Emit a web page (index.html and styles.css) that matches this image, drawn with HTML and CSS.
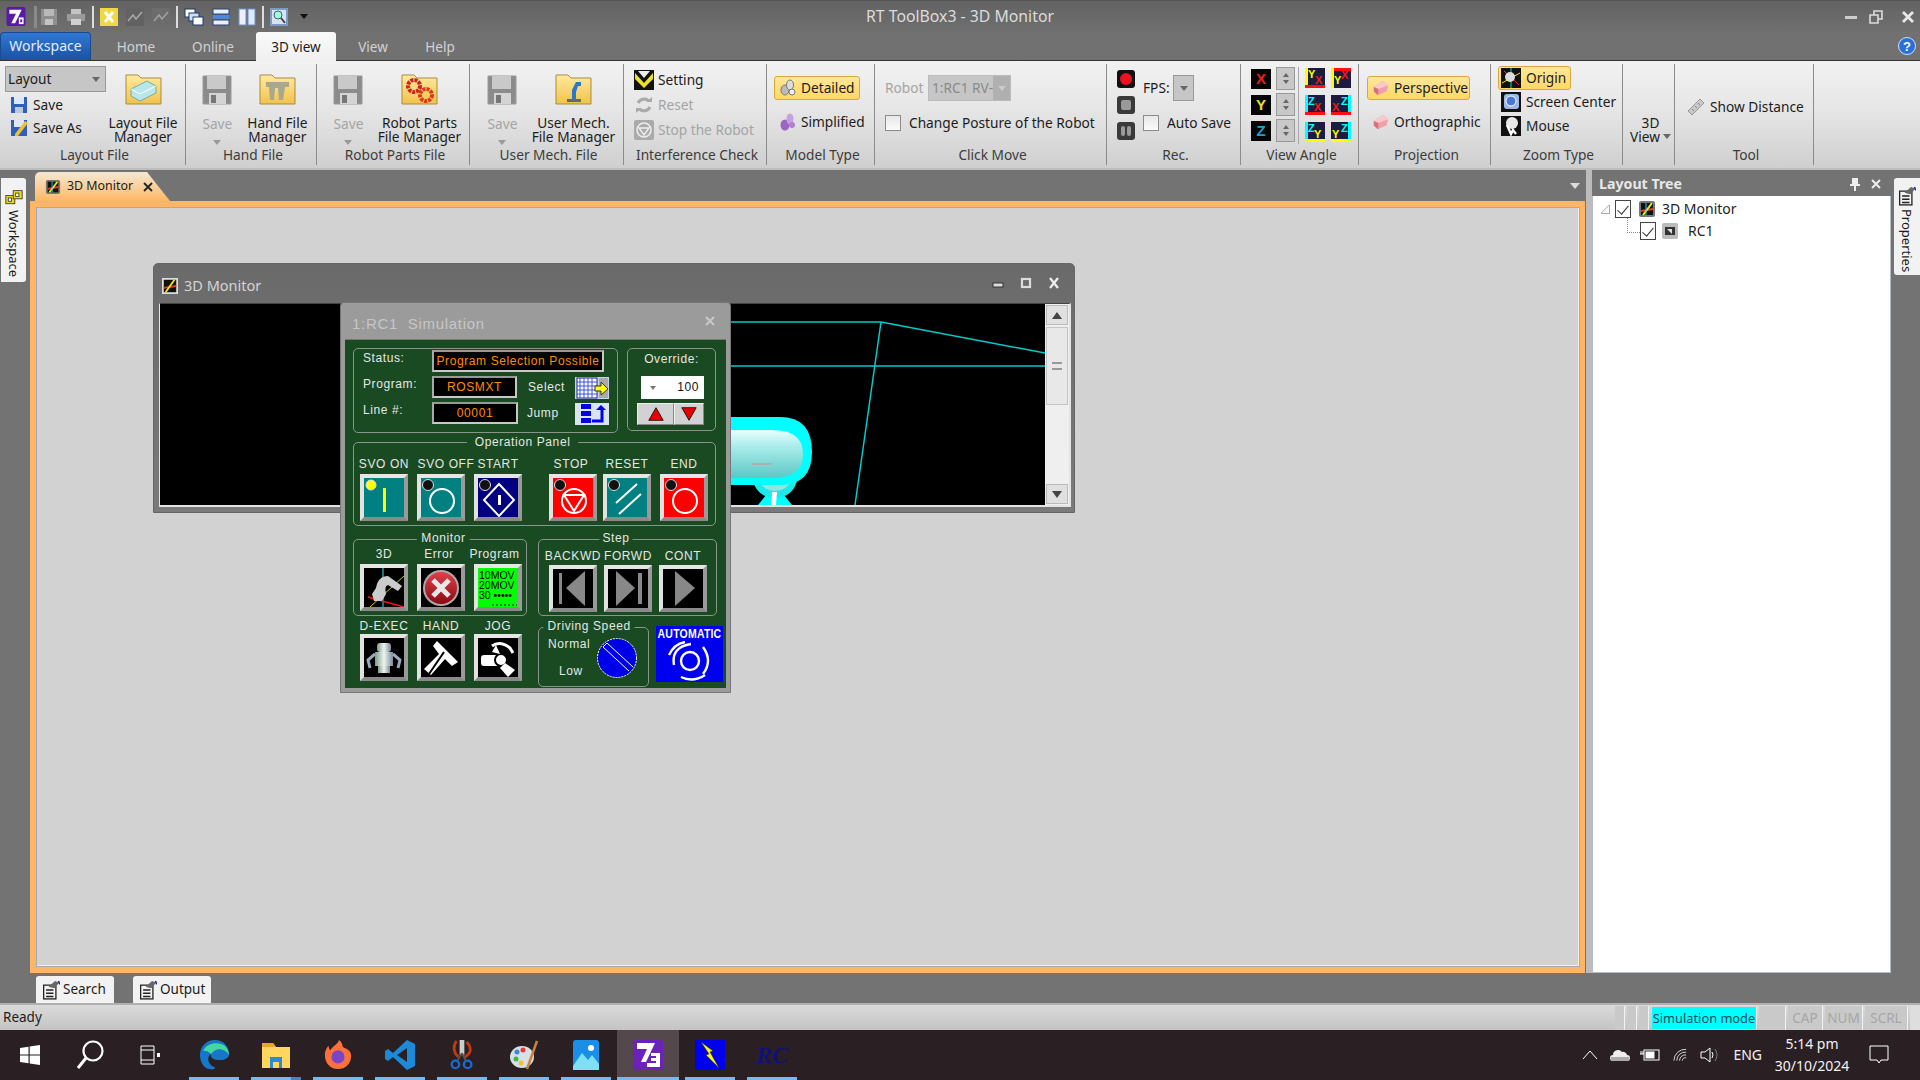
FILE: index.html
```html
<!DOCTYPE html>
<html lang="en">
<head>
<meta charset="utf-8">
<title>RT ToolBox3 - 3D Monitor</title>
<link rel="stylesheet" href="styles.css">
</head>
<body>
<svg class="sprites" width="0" height="0" aria-hidden="true">
  <defs>
    <linearGradient id="fold" x1="0" y1="0" x2="0" y2="1"><stop offset="0" stop-color="#ffeaa0"/><stop offset="1" stop-color="#f2c24a"/></linearGradient>
    <linearGradient id="ball" x1="0" y1="0" x2="0" y2="1"><stop offset="0" stop-color="#e0404a"/><stop offset="1" stop-color="#8a0a14"/></linearGradient>
    <linearGradient id="body3d" x1="0" y1="0" x2="0" y2="1"><stop offset="0" stop-color="#e8ffff"/><stop offset=".35" stop-color="#a8ecea"/><stop offset=".7" stop-color="#80d8d6"/><stop offset="1" stop-color="#5cc8c8"/></linearGradient>
    <linearGradient id="metal" x1="0" y1="0" x2="1" y2="0"><stop offset="0" stop-color="#7f9c8a"/><stop offset=".5" stop-color="#eef5f0"/><stop offset="1" stop-color="#7a8a9c"/></linearGradient>
    <symbol id="floppy" viewBox="0 0 30 30"><path d="M1 1H29V29H1Z" fill="#8b8b8b" stroke="#9a9a9a"/><rect x="5" y="1" width="19" height="13" fill="#c9c9c9"/><rect x="7" y="18" width="17" height="11" fill="#d4d4d4"/><rect x="9" y="20" width="5" height="8" fill="#777"/></symbol>
    <symbol id="folder" viewBox="0 0 37 32"><path d="M1 31V2H13L16 5H36V31Z" fill="url(#fold)" stroke="#a78b3e"/></symbol>
    <symbol id="rotbar" viewBox="0 0 20 20"><path d="M15 6A7 7 0 0 0 4 8M5 14A7 7 0 0 0 16 12" fill="none" stroke="#aaa" stroke-width="3"/><path d="M12 7h6V2zM8 13H2v5z" fill="#aaa"/></symbol>
    <symbol id="gem" viewBox="0 0 20 20"><path d="M2 9 12 2 18 7 16 14 6 18 2 14Z" fill="#f0a0a8"/><path d="M2 9 7 11 18 7 12 2Z" fill="#f8c8cc"/><path d="M7 11V18L2 14V9Z" fill="#d8707c"/></symbol>
    <symbol id="led" viewBox="0 0 12 12"><circle cx="6" cy="6" r="5.5" fill="#111" stroke="#ddd"/></symbol>
    <symbol id="tree-icon" viewBox="0 0 18 18"><rect x="1" y="1" width="16" height="16" rx="2" fill="#777"/><rect x="3" y="3" width="12" height="12" fill="#111"/><path d="M3 11 15 9" stroke="#e33" stroke-width="2"/><path d="M5 15 14 3" stroke="#ee0" stroke-width="2"/><path d="M8 3V15" stroke="#2cf" stroke-width="1"/></symbol>
    <symbol id="props" viewBox="0 0 22 24"><path d="M2 6H17V23H2Z" fill="#f2f2f2" stroke="#222" stroke-width="1.6"/><path d="M5 12H14M5 16H14M5 20H14" stroke="#222" stroke-width="2"/><path d="M8 8 16 1 21 3 15 10Z" fill="#666"/><path d="M20 1 22 5" stroke="#1a2a9a" stroke-width="2"/></symbol>
  </defs>
</svg>

<header class="titlebar">
  <div class="qat">
    <svg class="qi app" viewBox="0 0 20 20"><rect width="20" height="20" rx="2" fill="#5a1aa8"/><path d="M3 3H16L9 17H5L10 7H3Z" fill="#fff"/><rect x="13" y="11" width="5" height="7" fill="#fff"/><rect x="14.5" y="13" width="2" height="3" fill="#5a1aa8"/></svg>
    <i class="qsep qsep-dim"></i>
    <svg class="qi" viewBox="0 0 18 18"><path d="M1 1H17V17H1Z" fill="#8f8f8f"/><rect x="4" y="1" width="10" height="7" fill="#b8b8b8"/><rect x="5" y="11" width="8" height="6" fill="#c4c4c4"/></svg>
    <svg class="qi qi-wide" viewBox="0 0 20 18"><rect x="5" y="1" width="10" height="6" fill="#c4c4c4"/><rect x="1" y="6" width="18" height="7" fill="#9a9a9a"/><rect x="5" y="11" width="10" height="6" fill="#d0d0d0"/></svg>
    <i class="qsep"></i>
    <svg class="qi" viewBox="0 0 18 18"><rect width="18" height="18" fill="#f0d840"/><path d="M5 4 13 14M13 4 5 14" stroke="#fff" stroke-width="3"/></svg>
    <svg class="qi" viewBox="0 0 18 18"><rect width="18" height="18" fill="#626262"/><path d="M2 13 7 7 10 11 16 4" fill="none" stroke="#a8a8a8" stroke-width="1.6"/></svg>
    <svg class="qi" viewBox="0 0 18 18"><rect width="18" height="18" fill="#6c6c6c"/><path d="M2 13 7 7 10 11 16 4" fill="none" stroke="#a0a0a0" stroke-width="1.6"/></svg>
    <i class="qsep"></i>
    <svg class="qi qi-wide" viewBox="0 0 20 18"><rect x="1" y="1" width="10" height="8" fill="#fff" stroke="#1d3a6a"/><rect x="5" y="5" width="10" height="8" fill="#cfe0f4" stroke="#1d3a6a"/><rect x="9" y="9" width="10" height="8" fill="#fff" stroke="#1d3a6a"/></svg>
    <svg class="qi" viewBox="0 0 18 18"><rect x="1" y="1" width="16" height="5" fill="#eef" stroke="#27457a"/><rect x="1" y="7" width="16" height="4" fill="#4a88d8"/><rect x="1" y="12" width="16" height="5" fill="#eef" stroke="#27457a"/></svg>
    <svg class="qi" viewBox="0 0 18 18"><rect x="1" y="1" width="7" height="16" fill="#eef" stroke="#6a92c8"/><rect x="10" y="1" width="7" height="16" fill="#dfeafa" stroke="#6a92c8"/></svg>
    <i class="qsep"></i>
    <svg class="qi" viewBox="0 0 18 18"><rect width="18" height="18" fill="#7d9cc4"/><rect x="2" y="2" width="14" height="14" fill="#d8e4f4"/><circle cx="8" cy="7" r="4" fill="#9fd" stroke="#466"/><path d="M11 10 15 15" stroke="#444" stroke-width="2"/></svg>
    <span class="qat-more"></span>
  </div>
  <div class="app-title">RT ToolBox3 - 3D Monitor</div>
  <div class="winbtns">
    <svg viewBox="0 0 14 14" class="wb"><rect x="1" y="6" width="12" height="3" fill="#ccc"/></svg>
    <svg viewBox="0 0 14 14" class="wb"><path d="M1 5H9V13H1ZM5 5V1H13V9H9" fill="none" stroke="#ddd" stroke-width="1.6"/></svg>
    <svg viewBox="0 0 14 14" class="wb wb-close"><path d="M2 2 12 12M12 2 2 12" stroke="#e8e8e8" stroke-width="2.8"/></svg>
  </div>
</header>

<nav class="tabs">
  <div class="tab tab-app">Workspace</div>
  <div class="tab tab-home">Home</div>
  <div class="tab">Online</div>
  <div class="tab tab-active">3D view</div>
  <div class="tab">View</div>
  <div class="tab">Help</div>
  <svg class="help" viewBox="0 0 18 18"><circle cx="9" cy="9" r="8.5" fill="#2a6fd8" stroke="#cfe0ff"/><text x="9" y="14" text-anchor="middle" class="help-q">?</text></svg>
</nav>

<section class="ribbon">
  <div class="group g1">
    <div class="gbody">
      <div class="col-layout">
        <div class="combo"><span>Layout</span><i class="tri"></i></div>
        <div class="row row-save"><svg class="ic18" viewBox="0 0 18 18"><path d="M1 1H17V17H1Z" fill="#2f5fb8"/><rect x="4" y="1" width="10" height="7" fill="#dfe8f8"/><rect x="5" y="11" width="8" height="6" fill="#b8c8e0"/></svg>Save</div>
        <div class="row row-save"><svg class="ic18" viewBox="0 0 18 18"><path d="M1 1H17V17H1Z" fill="#2f5fb8"/><rect x="4" y="1" width="10" height="7" fill="#dfe8f8"/><path d="M5 15 15 2 18 4 8 17H5Z" fill="#f0c030"/></svg>Save As</div>
      </div>
      <div class="big big-74">
        <svg class="folder" viewBox="0 0 37 32"><use href="#folder"/><path d="M6 16 22 8 31 13 31 20 15 28 6 23Z" fill="#b8e6ea" stroke="#7aa"/><path d="M6 16 15 21 31 13" fill="none" stroke="#fff"/></svg>
        <span>Layout File<br>Manager</span>
      </div>
    </div>
    <div class="glabel">Layout File</div>
  </div>

  <div class="group g2">
    <div class="gbody gbody-big">
      <div class="big big-40 off"><svg class="floppy" viewBox="0 0 30 30"><use href="#floppy"/></svg><span>Save</span><i class="tri tri-off"></i></div>
      <div class="big big-80">
        <svg class="folder" viewBox="0 0 37 32"><use href="#folder"/><path d="M7 9H30V14H26L24 27H20L19 15H16L15 27H11L10 14H7Z" fill="#a8a890"/></svg>
        <span>Hand File<br>Manager</span>
      </div>
    </div>
    <div class="glabel">Hand File</div>
  </div>

  <div class="group g3">
    <div class="gbody gbody-big">
      <div class="big big-40 off"><svg class="floppy" viewBox="0 0 30 30"><use href="#floppy"/></svg><span>Save</span><i class="tri tri-off"></i></div>
      <div class="big big-102">
        <svg class="folder" viewBox="0 0 37 32"><use href="#folder"/><circle cx="13" cy="13" r="6" fill="none" stroke="#c8261e" stroke-width="4" stroke-dasharray="3 1"/><circle cx="25" cy="22" r="6" fill="none" stroke="#d83a1e" stroke-width="4" stroke-dasharray="3 1"/></svg>
        <span>Robot Parts<br>File Manager</span>
      </div>
    </div>
    <div class="glabel">Robot Parts File</div>
  </div>

  <div class="group g4">
    <div class="gbody gbody-big">
      <div class="big big-40 off"><svg class="floppy" viewBox="0 0 30 30"><use href="#floppy"/></svg><span>Save</span><i class="tri tri-off"></i></div>
      <div class="big big-102">
        <svg class="folder" viewBox="0 0 37 32"><use href="#folder"/><path d="M12 26H26V29H12Z" fill="#667"/><path d="M17 26V17L21 9H26V13H23L21 19V26Z" fill="#2a78c8"/></svg>
        <span>User Mech.<br>File Manager</span>
      </div>
    </div>
    <div class="glabel">User Mech. File</div>
  </div>

  <div class="group g5">
    <div class="gbody gbody-list">
      <div class="row rowi"><svg class="ic20" viewBox="0 0 20 20"><rect width="20" height="20" fill="#111"/><path d="M1 3 10 13 19 3V9L10 18 1 9Z" fill="#ede02a"/><path d="M4 1 10 8 16 1Z" fill="#eee"/></svg>Setting</div>
      <div class="row rowi off"><svg class="ic20" viewBox="0 0 20 20"><use href="#rotbar"/></svg>Reset</div>
      <div class="row rowi off"><svg class="ic20" viewBox="0 0 20 20"><rect width="20" height="20" rx="2" fill="#aaa"/><circle cx="10" cy="10" r="7" fill="none" stroke="#eee" stroke-width="1.5"/><path d="M5 8H15L10 15Z" fill="none" stroke="#eee" stroke-width="1.5"/></svg>Stop the Robot</div>
    </div>
    <div class="glabel">Interference Check</div>
  </div>

  <div class="group g6">
    <div class="gbody gbody-model">
      <div class="pick pick-on pick-86"><svg class="ic18" viewBox="0 0 18 18"><ellipse cx="6" cy="11" rx="4" ry="5" fill="#bbb" stroke="#777"/><ellipse cx="11" cy="6" rx="3.5" ry="5" fill="#ddd" stroke="#777"/><ellipse cx="13" cy="13" rx="3" ry="3" fill="#eee" stroke="#777"/></svg>Detailed</div>
      <div class="pick"><svg class="ic18" viewBox="0 0 18 18"><ellipse cx="6" cy="12" rx="4.5" ry="5.5" fill="#9a66c0"/><ellipse cx="11" cy="6" rx="3.5" ry="5.5" fill="#c8a0e0"/><circle cx="13" cy="12" r="3" fill="#b080d0"/></svg>Simplified</div>
    </div>
    <div class="glabel">Model Type</div>
  </div>

  <div class="group g7">
    <div class="gbody gbody-form">
      <div class="fline off"><span class="robot-lbl">Robot</span><div class="combo combo-robot"><span>1:RC1 RV-</span><b><i class="tri tri-lite"></i></b></div></div>
      <div class="cline"><i class="check"></i>Change Posture of the Robot</div>
    </div>
    <div class="glabel">Click Move</div>
  </div>

  <div class="group g8">
    <div class="gbody gbody-rec">
      <div class="rec-btns">
        <svg class="ic18" viewBox="0 0 18 18"><rect width="18" height="18" rx="3" fill="#111"/><circle cx="9" cy="9" r="6" fill="#ee1122"/></svg>
        <svg class="ic18" viewBox="0 0 18 18"><rect width="18" height="18" rx="3" fill="#3a3a3a"/><rect x="4" y="4" width="10" height="10" rx="2" fill="#9a9a9a"/></svg>
        <svg class="ic18" viewBox="0 0 18 18"><rect width="18" height="18" rx="3" fill="#3a3a3a"/><rect x="4" y="4" width="4" height="10" rx="2" fill="#9a9a9a"/><rect x="10" y="4" width="4" height="10" rx="2" fill="#9a9a9a"/></svg>
      </div>
      <div class="rec-form">
        <div class="fline"><span class="fps-lbl">FPS:</span><div class="combo combo-fps"><i class="tri"></i></div></div>
        <div class="cline"><i class="check"></i>Auto Save</div>
      </div>
    </div>
    <div class="glabel">Rec.</div>
  </div>

  <div class="group g9">
    <div class="gbody gbody-view">
      <div class="axes">
        <span class="axis axis-x">X</span><div class="spin"><i></i><i></i></div>
        <span class="axis axis-y">Y</span><div class="spin"><i></i><i></i></div>
        <span class="axis axis-z">Z</span><div class="spin"><i></i><i></i></div>
      </div>
      <i class="vsep"></i>
      <div class="views">
        <svg viewBox="0 0 20 20"><rect width="20" height="20" fill="#1c1c40"/><rect width="3" height="20" fill="#ff0"/><rect y="17" width="20" height="3" fill="#f11"/><text x="3" y="10" class="vt vy">Y</text><text x="10" y="16" class="vt vr">X</text></svg>
        <svg viewBox="0 0 20 20"><rect width="20" height="20" fill="#1c1c40"/><rect width="20" height="3" fill="#f11"/><rect width="3" height="20" fill="#ff0"/><text x="10" y="11" class="vt vr">X</text><text x="3" y="16" class="vt vy">Y</text></svg>
        <svg viewBox="0 0 20 20"><rect width="20" height="20" fill="#1c1c40"/><rect width="3" height="20" fill="#0ff"/><rect y="17" width="20" height="3" fill="#f11"/><text x="3" y="10" class="vt vc">Z</text><text x="9" y="16" class="vt vr">X</text></svg>
        <svg viewBox="0 0 20 20"><rect width="20" height="20" fill="#1c1c40"/><rect x="17" width="3" height="20" fill="#0ff"/><rect y="17" width="20" height="3" fill="#f11"/><text x="10" y="10" class="vt vc">Z</text><text x="1" y="16" class="vt vr">X</text></svg>
        <svg viewBox="0 0 20 20"><rect width="20" height="20" fill="#1c1c40"/><rect width="3" height="20" fill="#0ff"/><rect y="17" width="20" height="3" fill="#ff0"/><text x="3" y="10" class="vt vc">Z</text><text x="9" y="16" class="vt vy">Y</text></svg>
        <svg viewBox="0 0 20 20"><rect width="20" height="20" fill="#1c1c40"/><rect x="17" width="3" height="20" fill="#0ff"/><rect y="17" width="20" height="3" fill="#ff0"/><text x="10" y="10" class="vt vc">Z</text><text x="1" y="16" class="vt vy">Y</text></svg>
      </div>
    </div>
    <div class="glabel">View Angle</div>
  </div>

  <div class="group g10">
    <div class="gbody gbody-model">
      <div class="pick pick-on pick-103"><svg class="ic18" viewBox="0 0 20 20"><use href="#gem"/></svg>Perspective</div>
      <div class="pick"><svg class="ic18" viewBox="0 0 20 20"><use href="#gem"/></svg>Orthographic</div>
    </div>
    <div class="glabel">Projection</div>
  </div>

  <div class="group g11">
    <div class="gbody gbody-zoom">
      <div class="zrow zrow-on"><svg class="ic20" viewBox="0 0 20 20"><rect width="20" height="20" fill="#111"/><path d="M1 15 19 5" stroke="#ee0"/><path d="M3 3 18 17" stroke="#e33"/><path d="M10 0V20" stroke="#2cc"/><circle cx="9" cy="9" r="5" fill="#ddd"/></svg>Origin</div>
      <div class="zrow"><svg class="ic20" viewBox="0 0 20 20"><rect width="20" height="20" fill="#111"/><rect x="3" y="2" width="15" height="15" rx="3" fill="#9db8e8"/><circle cx="10" cy="9" r="5" fill="#4a78d8" stroke="#fff"/></svg>Screen Center</div>
      <div class="zrow"><svg class="ic20" viewBox="0 0 20 20"><rect width="20" height="20" fill="#111"/><circle cx="11" cy="7" r="6" fill="#e8e8e8"/><path d="M6 9 10 18 12 14 15 18" stroke="#fff" stroke-width="2.4" fill="none"/></svg>Mouse</div>
    </div>
    <div class="glabel">Zoom Type</div>
  </div>

  <div class="group g12">
    <div class="gbody gbody-3d"><div class="big big-3d"><span>3D<br>View<i class="tri tri-inline"></i></span></div></div>
    <div class="glabel">&nbsp;</div>
  </div>

  <div class="group g13">
    <div class="gbody gbody-tool"><div class="row rowi"><svg class="ic18" viewBox="0 0 18 18"><path d="M1 13 13 1 17 5 5 17Z" fill="#c8c8c8" stroke="#999"/><path d="M5 11 7 13M8 8 10 10M11 5 13 7" stroke="#888"/></svg>Show Distance</div></div>
    <div class="glabel">Tool</div>
  </div>
</section>

<main class="workarea">
  <aside class="left-rail">
    <div class="side-tab side-ws">
      <svg class="ws-ic" viewBox="0 0 22 22"><rect x="1" y="8" width="11" height="10" fill="#e6d820" stroke="#333"/><rect x="10" y="2" width="11" height="10" fill="#e6d820" stroke="#333"/><rect x="4" y="11" width="4" height="4" fill="#fff" stroke="#333"/><rect x="13" y="5" width="4" height="4" fill="#fff" stroke="#333"/></svg>
      <span class="vtext">Workspace</span>
    </div>
  </aside>

  <div class="center">
    <div class="doc-tabs">
      <div class="doc-tab"><svg class="doc-ic" viewBox="0 0 18 18"><use href="#tree-icon"/></svg><span>3D Monitor</span><svg class="doc-x" viewBox="0 0 12 12"><path d="M2 2 10 10M10 2 2 10" stroke="#222" stroke-width="1.8"/></svg></div>
      <i class="doc-more"></i>
    </div>
    <div class="doc-frame">
      <div class="mdi">
        <div class="win monitor">
          <div class="win-title">
            <svg class="doc-ic" viewBox="0 0 18 18"><rect width="18" height="18" fill="#ddd"/><rect x="2" y="2" width="14" height="14" fill="#111"/><path d="M2 11 16 9" stroke="#e33" stroke-width="2"/><path d="M4 16 14 2" stroke="#ee0" stroke-width="2"/></svg>
            <span>3D Monitor</span>
            <div class="win-btns">
              <svg viewBox="0 0 14 14"><rect x="2" y="7" width="10" height="4" fill="#ddd" stroke="#333"/></svg>
              <svg viewBox="0 0 14 14"><rect x="3" y="3" width="8" height="8" fill="none" stroke="#ddd" stroke-width="2.2"/></svg>
              <svg viewBox="0 0 14 14"><path d="M3 2 11 12M11 2 3 12" stroke="#eee" stroke-width="2.2"/></svg>
            </div>
          </div>
          <div class="win-body">
            <svg class="scene" viewBox="0 0 885 201">
              <path d="M570 18H721L885 49M570 62H885M721 18 695 201" fill="none" stroke="#0cc" stroke-width="1.5"/>
              <path d="M598 201 607 190H623L632 201Z" fill="#0ff"/>
              <ellipse cx="615" cy="174" rx="22" ry="20" fill="#1fe8e8"/>
              <ellipse cx="615" cy="172" rx="17" ry="15" fill="#8ee6e6"/>
              <path d="M612 188H617L616 201H611Z" fill="#fff"/>
              <path d="M540 113H620Q652 113 652 148Q652 181 620 181H540Z" fill="#0ff"/>
              <path d="M540 126H612Q643 126 643 150Q643 174 612 174H540Z" fill="url(#body3d)"/>
              <path d="M592 160H612" stroke="#d88" stroke-width="1"/>
            </svg>
            <div class="vscroll">
              <i class="sb-btn"><b class="up"></b></i>
              <div class="sb-track"><div class="sb-thumb"><i></i></div></div>
              <i class="sb-btn"><b class="down"></b></i>
            </div>
          </div>
        </div>

        <div class="win sim">
          <div class="sim-title"><span>1:RC1&nbsp;&nbsp;Simulation</span><svg viewBox="0 0 12 12"><path d="M2 2 10 10M10 2 2 10" stroke="#c8c8c8" stroke-width="2"/></svg></div>
          <div class="sim-body">
            <div class="srow srow-top">
              <div class="pnl pnl-status">
                <div class="stat-line"><span class="lbl lbl-a">Status:</span><div class="led-field led-wide">Program Selection Possible</div></div>
                <div class="stat-line"><span class="lbl lbl-a">Program:</span><div class="led-field led-85">ROSMXT</div><span class="lbl lbl-b">Select</span>
                  <svg class="mini" viewBox="0 0 34 22"><rect width="34" height="22" fill="#c8d4e8"/><rect x="2" y="1" width="20" height="20" fill="#fff" stroke="#228"/><path d="M5 1V21M9 1V21M13 1V21M17 1V21M2 5H22M2 9H22M2 13H22M2 17H22" stroke="#3a52e8"/><rect x="24" y="1" width="9" height="20" fill="#aaa"/><path d="M20 9H26V5L33 12 26 18V14H20Z" fill="#ff0" stroke="#333"/></svg>
                </div>
                <div class="stat-line"><span class="lbl lbl-a">Line #:</span><div class="led-field led-86">00001</div><span class="lbl lbl-c">Jump</span>
                  <svg class="mini" viewBox="0 0 34 22"><rect width="34" height="22" fill="#d8e4f4"/><rect x="6" y="1" width="10" height="5" fill="#0000e8"/><rect x="6" y="8" width="10" height="5" fill="#0000e8"/><rect x="6" y="15" width="10" height="5" fill="#0000e8"/><path d="M27 6V18H17" fill="none" stroke="#0000e8" stroke-width="3"/><path d="M20 6 25 1 30 6Z" fill="#0000e8" transform="translate(1 1)"/></svg>
                </div>
              </div>
              <div class="pnl pnl-over">
                <div class="lbl over-lbl">Override:</div>
                <div class="over-input"><i class="tri tri-small"></i><span>100</span></div>
                <div class="over-btns">
                  <div class="over-btn over-btn-up"><svg viewBox="0 0 20 16"><path d="M10 1 18 15H2Z" fill="#e80000" stroke="#111"/></svg></div>
                  <div class="over-btn"><svg viewBox="0 0 20 16"><path d="M2 1H18L10 15Z" fill="#e80000" stroke="#111"/></svg></div>
                </div>
              </div>
            </div>

            <div class="pnl pnl-op">
              <span class="legend legend-op">Operation Panel</span>
              <div class="pcol"><span class="lbl">SVO ON</span>
                <div class="pbtn"><svg viewBox="0 0 40 39"><rect width="40" height="39" fill="#008080"/><circle cx="7" cy="7" r="5" fill="#ff0" stroke="#ddd"/><rect x="19" y="10" width="3" height="24" fill="#ff0"/></svg></div></div>
              <div class="pcol"><span class="lbl lbl-svo">SVO OFF</span>
                <div class="pbtn"><svg viewBox="0 0 40 39"><rect width="40" height="39" fill="#008080"/><use href="#led" x="1" y="1" width="12" height="12"/><circle cx="21" cy="23" r="12" fill="none" stroke="#fff" stroke-width="2"/></svg></div></div>
              <div class="pcol"><span class="lbl">START</span>
                <div class="pbtn"><svg viewBox="0 0 40 39"><rect width="40" height="39" fill="#000080"/><use href="#led" x="1" y="1" width="12" height="12"/><path d="M21 6 36 22 21 38 6 22Z" fill="none" stroke="#fff" stroke-width="2"/><rect x="20" y="17" width="3" height="10" fill="#fff"/></svg></div></div>
              <div class="pcol pcol-stop"><span class="lbl">STOP</span>
                <div class="pbtn"><svg viewBox="0 0 40 39"><rect width="40" height="39" fill="#f00"/><use href="#led" x="1" y="1" width="12" height="12"/><circle cx="21" cy="23" r="12" fill="none" stroke="#fff" stroke-width="2"/><path d="M11 17H31L21 33Z" fill="none" stroke="#fff" stroke-width="2"/></svg></div></div>
              <div class="pcol pcol-reset"><span class="lbl">RESET</span>
                <div class="pbtn"><svg viewBox="0 0 40 39"><rect width="40" height="39" fill="#008080"/><use href="#led" x="1" y="1" width="12" height="12"/><path d="M9 25 30 6M12 36 34 16" stroke="#fff" stroke-width="2"/></svg></div></div>
              <div class="pcol"><span class="lbl">END</span>
                <div class="pbtn"><svg viewBox="0 0 40 39"><rect width="40" height="39" fill="#f00"/><use href="#led" x="1" y="1" width="12" height="12"/><circle cx="21" cy="23" r="12" fill="none" stroke="#fff" stroke-width="2"/></svg></div></div>
            </div>

            <div class="srow srow-mid">
              <div class="pnl pnl-mon">
                <span class="legend legend-mon">Monitor</span>
                <div class="pcol"><span class="lbl">3D</span>
                  <div class="pbtn"><svg viewBox="0 0 40 39"><rect width="40" height="39" fill="#000"/><path d="M19 0V39" stroke="#2ee"/><path d="M6 39 40 8" stroke="#cc0"/><path d="M4 29 40 39" stroke="#f11" stroke-width="1.5"/><path d="M12 20Q14 8 24 8L38 18 34 23 24 17Q20 18 22 26L18 33H10L8 26Z" fill="#ccc"/></svg></div></div>
                <div class="pcol"><span class="lbl lbl-err">Error</span>
                  <div class="pbtn"><svg viewBox="0 0 40 39"><rect width="40" height="39" fill="#000"/><circle cx="20" cy="20" r="18" fill="#aaa"/><circle cx="20" cy="20" r="16" fill="url(#ball)"/><path d="M12 12 28 28M28 12 12 28" stroke="#e8e8e8" stroke-width="5"/></svg></div></div>
                <div class="pcol"><span class="lbl lbl-prog">Program</span>
                  <div class="pbtn"><svg viewBox="0 0 40 39"><rect width="40" height="39" fill="#0f0"/><text x="1" y="11" class="prog">10MOV</text><text x="1" y="21" class="prog">20MOV</text><text x="1" y="31" class="prog">30 •••••</text><path d="M14 37H39" stroke="#000" stroke-dasharray="2 2"/></svg></div></div>
              </div>
              <div class="pnl pnl-step">
                <span class="legend legend-step">Step</span>
                <div class="pcol"><span class="lbl">BACKWD</span>
                  <div class="pbtn"><svg viewBox="0 0 40 39"><rect width="40" height="39" fill="#000"/><rect x="6" y="4" width="3" height="31" fill="#888"/><path d="M32 2V37L13 19Z" fill="#888"/></svg></div></div>
                <div class="pcol"><span class="lbl">FORWD</span>
                  <div class="pbtn"><svg viewBox="0 0 40 39"><rect width="40" height="39" fill="#000"/><rect x="30" y="4" width="4" height="31" fill="#888"/><path d="M8 2V37L27 19Z" fill="#888"/></svg></div></div>
                <div class="pcol"><span class="lbl">CONT</span>
                  <div class="pbtn"><svg viewBox="0 0 40 39"><rect width="40" height="39" fill="#000"/><path d="M12 2V37L32 19Z" fill="#888"/></svg></div></div>
              </div>
            </div>

            <div class="srow srow-bot">
              <div class="tools">
                <div class="pcol"><span class="lbl">D-EXEC</span>
                  <div class="pbtn"><svg viewBox="0 0 40 39"><rect width="40" height="39" fill="#000"/><rect x="13" y="5" width="14" height="9" rx="3" fill="url(#metal)"/><rect x="11" y="14" width="18" height="14" fill="url(#metal)"/><rect x="14" y="28" width="12" height="7" fill="url(#metal)"/><path d="M11 16 4 22 6 30M29 16 36 22 34 30" fill="none" stroke="#9ab" stroke-width="3"/></svg></div></div>
                <div class="pcol"><span class="lbl">HAND</span>
                  <div class="pbtn"><svg viewBox="0 0 40 39"><rect width="40" height="39" fill="#000"/><path d="M16 3 37 24 31 28 24 21 10 37 3 31 18 16 12 8Z" fill="#fff"/><path d="M23 14 8 36" stroke="#000" stroke-width="2"/></svg></div></div>
                <div class="pcol"><span class="lbl">JOG</span>
                  <div class="pbtn"><svg viewBox="0 0 40 39"><rect width="40" height="39" fill="#000"/><rect x="3" y="17" width="20" height="11" rx="3" fill="#fff"/><circle cx="23" cy="22" r="6" fill="#fff" stroke="#000" stroke-width="2"/><path d="M27 25 37 32 30 39 22 30Z" fill="#fff"/><path d="M14 8Q22 2 32 10L35 15" fill="none" stroke="#fff" stroke-width="3"/><path d="M14 14 18 7 22 16" fill="#fff"/></svg></div></div>
              </div>
              <div class="pnl pnl-speed">
                <span class="legend legend-speed">Driving Speed</span>
                <div class="speed-lbls"><span class="lbl">Normal</span><span class="lbl lbl-low">Low</span></div>
                <svg class="dial" viewBox="0 0 40 40"><circle cx="20" cy="20" r="19.5" fill="#0000e8" stroke="#fff" stroke-dasharray="2 1"/><path d="M6 9 32 33M10 5 36 29" stroke="#fff"/><path d="M6 9 10 5" stroke="#fff"/></svg>
              </div>
              <div class="auto">
                <span class="auto-txt">AUTOMATIC</span>
                <svg class="auto-ic" viewBox="0 0 50 40"><circle cx="25" cy="20" r="9" fill="none" stroke="#fff" stroke-width="2.4"/><path d="M9 24Q6 6 26 3M4 14Q9 3 20 1M38 6Q48 20 38 33M16 36Q28 42 40 34" fill="none" stroke="#fff" stroke-width="2.4"/></svg>
              </div>
            </div>
          </div>
        </div>
      </div>
    </div>
    <div class="bottom-tabs">
      <div class="btab"><svg class="props-ic" viewBox="0 0 22 24"><use href="#props"/></svg>Search</div>
      <div class="btab"><svg class="props-ic" viewBox="0 0 22 24"><use href="#props"/></svg>Output</div>
    </div>
  </div>

  <i class="splitter"></i>

  <aside class="tree-panel">
    <div class="tree-head"><span>Layout Tree</span>
      <svg class="pin" viewBox="0 0 12 14"><path d="M3 1H9V7H11V9H7V14H5V9H1V7H3Z" fill="#eee"/></svg>
      <svg class="pin" viewBox="0 0 12 14"><path d="M2 3 10 11M10 3 2 11" stroke="#eee" stroke-width="2"/></svg>
    </div>
    <div class="tree-body">
      <div class="node"><i class="exp"></i><i class="tcheck"></i><svg class="tree-ic" viewBox="0 0 18 18"><use href="#tree-icon"/></svg><span>3D Monitor</span></div>
      <div class="node node-sub"><i class="elbow"></i><i class="tcheck"></i><svg class="tree-ic" viewBox="0 0 18 18"><rect x="1" y="1" width="16" height="16" rx="2" fill="#bbb"/><rect x="4" y="5" width="10" height="8" fill="#333"/><path d="M6 7 11 7 11 12 8 9Z" fill="#ddd"/></svg><span>RC1</span></div>
    </div>
  </aside>

  <aside class="right-rail">
    <div class="side-tab side-props"><svg class="props-ic" viewBox="0 0 22 24"><use href="#props"/></svg><span class="vtext">Properties</span></div>
  </aside>
</main>

<footer class="statusbar">
  <span class="ready">Ready</span>
  <div class="panes">
    <i class="pane p9"></i><i class="pane p9"></i><i class="pane p9"></i>
    <span class="pane sim-mode">Simulation mode</span>
    <i class="pane p26"></i>
    <span class="pane p35">CAP</span><span class="pane p37">NUM</span><span class="pane p42">SCRL</span>
    <i class="pane pend"></i>
  </div>
</footer>

<div class="taskbar">
  <div class="tb tb-sys"><svg viewBox="0 0 20 20" class="tbi tbi-win"><path d="M0 3 8.5 1.8V9.5H0ZM9.7 1.6 20 0V9.5H9.7ZM0 10.5H8.5V18.2L0 17ZM9.7 10.5H20V20L9.7 18.4Z" fill="#fff"/></svg></div>
  <div class="tb tb-sys"><svg viewBox="0 0 28 30" class="tbi"><circle cx="17" cy="11" r="9.5" fill="none" stroke="#fff" stroke-width="2.2"/><path d="M10 18 2 28" stroke="#fff" stroke-width="3"/></svg></div>
  <div class="tb tb-sys"><svg viewBox="0 0 20 20" class="tbi tbi-win"><path d="M1 1H14M1 19H14M1 5H14V15H1ZM1 5V1M14 5V1M1 15V19M14 15V19" fill="none" stroke="#fff"/><rect x="17" y="8" width="3" height="4" fill="#fff"/></svg></div>
  <div class="tb tb-on tb-first"><svg viewBox="0 0 30 30" class="tbi"><path d="M1 15C1 6 8 0 16 0 25 0 30 7 30 14 30 18 26 20 21 20 15 20 11 18 12 14 8 16 8 24 15 27 20 29 8 32 4 25 2 22 1 19 1 15Z" fill="#1677c8"/><path d="M4 11C7 3 20 1 26 6 30 10 30 14 30 15 27 9 17 6 12 14 10 12 7 10 4 11Z" fill="#42d8a0"/></svg></div>
  <div class="tb tb-on tb-split"><svg viewBox="0 0 30 30" class="tbi"><path d="M1 3H12L15 7H29V28H1Z" fill="#ffd75e"/><path d="M1 3H12L15 7H1Z" fill="#e8a62c"/><rect x="9" y="17" width="12" height="11" fill="#2a8ad8"/><rect x="12" y="22" width="6" height="6" fill="#ffd75e"/></svg></div>
  <div class="tb tb-on"><svg viewBox="0 0 30 32" class="tbi"><path d="M15 31C6 31 1 24 1 16 1 11 3 8 5 6 5 9 6 10 7 11 9 6 15 5 16 0 21 4 19 7 21 8 26 10 29 12 29 17 29 25 23 31 15 31Z" fill="#ff7139"/><circle cx="15" cy="18" r="7" fill="#7b45c8"/></svg></div>
  <div class="tb tb-on"><svg viewBox="0 0 30 30" class="tbi"><path d="M22 0 30 4V26L22 30 8 17 3 21 0 19V11L3 9 8 13ZM22 8 12 15 22 22Z" fill="#1c8ad8"/></svg></div>
  <div class="tb tb-on"><svg viewBox="0 0 28 32" class="tbi"><path d="M14 0V16" stroke="#ccc" stroke-width="5"/><path d="M8 1Q2 10 10 18M19 2Q28 12 16 19" fill="none" stroke="#c8380e" stroke-width="3"/><circle cx="7" cy="26" r="4" fill="none" stroke="#1c6ad0" stroke-width="2.5"/><circle cx="20" cy="26" r="4" fill="none" stroke="#1c6ad0" stroke-width="2.5"/><path d="M9 22 14 14M18 22 14 14" stroke="#555" stroke-width="2"/></svg></div>
  <div class="tb tb-on"><svg viewBox="0 0 30 30" class="tbi"><ellipse cx="13" cy="17" rx="12" ry="11" fill="#d8dfe6"/><circle cx="8" cy="12" r="2.5" fill="#3a88d8"/><circle cx="14" cy="10" r="2.5" fill="#e83a3a"/><circle cx="7" cy="19" r="2.5" fill="#3ab84a"/><circle cx="12" cy="23" r="2.5" fill="#f0c030"/><path d="M28 1 18 29" stroke="#c8843a" stroke-width="2.5"/></svg></div>
  <div class="tb tb-on"><svg viewBox="0 0 26 30" class="tbi"><rect width="26" height="30" rx="3" fill="#1b8ee8"/><path d="M0 26 9 13 15 20 19 15 26 24V30H0Z" fill="#7fe0f4"/><circle cx="18" cy="8" r="3" fill="#fff"/></svg></div>
  <div class="tb tb-sel"><svg viewBox="0 0 30 30" class="tbi"><rect width="30" height="30" rx="3" fill="#6a22b8"/><path d="M4 3H22L13 22H8L14 9H4Z" fill="#fff"/><path d="M18 13H27V27H14V23H23V21H18V18H23V16H18Z" fill="#fff"/></svg></div>
  <div class="tb tb-on"><svg viewBox="0 0 30 30" class="tbi"><rect width="30" height="30" fill="#0000f0"/><path d="M6 2 14 14 11 15 24 28 15 12 18 11Z" fill="#ff0" stroke="#222" stroke-width=".5"/></svg></div>
  <div class="tb tb-on tb-rc"><span>RC</span></div>
  <div class="tray">
    <svg viewBox="0 0 16 10" class="tr tr-chev"><path d="M1 9 8 1 15 9" fill="none" stroke="#fff"/></svg>
    <svg viewBox="0 0 20 12" class="tr tr-cloud"><path d="M3 12A3 3 0 0 1 3 6 5 5 0 0 1 12 3 4 4 0 0 1 17 6 3 3 0 0 1 17 12Z" fill="#eee"/><path d="M3 12A3 3 0 0 1 1 8H19A3 3 0 0 1 17 12Z" fill="#aaa"/></svg>
    <svg viewBox="0 0 20 12" class="tr tr-batt"><rect x="4" y="1" width="15" height="10" fill="none" stroke="#fff"/><rect x="5.5" y="2.5" width="9" height="7" fill="#fff"/><path d="M0 5H4M1 2V5M3 2V5" stroke="#fff"/></svg>
    <svg viewBox="0 0 16 14" class="tr tr-wifi"><path d="M1 13A12 12 0 0 1 14 1M4 13A9 9 0 0 1 14 4M7 13A6 6 0 0 1 14 7M10 13A3 3 0 0 1 14 10" fill="none" stroke="#ddd"/></svg>
    <svg viewBox="0 0 20 16" class="tr tr-vol"><path d="M1 5H5L10 1V15L5 11H1Z" fill="none" stroke="#fff"/><path d="M12 5Q14 8 12 11" fill="none" stroke="#fff"/><path d="M15 2Q19 8 15 14" fill="none" stroke="#777"/></svg>
    <span class="eng">ENG</span>
    <div class="clock"><span>5:14 pm</span><span>30/10/2024</span></div>
    <svg viewBox="0 0 20 20" class="tr tr-note"><path d="M1 1H19V15H12L10 18 8 15H1Z" fill="none" stroke="#fff"/></svg>
  </div>
</div>
</body>
</html>
```
FILE: styles.css
```css
* { box-sizing: border-box; }
html, body { margin: 0; padding: 0; height: 100%; }
body {
  width: 1920px; height: 1080px; overflow: hidden;
  display: flex; flex-direction: column;
  background: #737373; color: #1c1c1c;
  font: 13px/1.15 "Noto Sans", "Open Sans", sans-serif;
}
i { display: block; font-style: normal; }
svg { display: block; flex: none; }
.sprites { position: absolute; }

/* title bar */
.titlebar { height: 32px; display: flex; align-items: center; position: relative; background: linear-gradient(#636363, #6f6f6f); border-top: 1px solid #555; }
.qat { display: flex; align-items: center; padding-left: 6px; gap: 8px; }
.qi { width: 18px; height: 18px; }
.qi.app { width: 20px; height: 19px; }
.qi-wide { width: 20px; }
.qsep { width: 2px; height: 22px; margin: 0 -2px; background: #ddd; }
.qsep-dim { background: #8a8a8a; margin: 0 -5px 0 0; width: 3px; }
.qat-more { width: 0; height: 0; margin-left: 4px; border: 4px solid transparent; border-top: 5px solid #111; border-bottom: 0; }
.app-title { position: absolute; left: 0; right: 0; top: 6px; text-align: center; font-size: 15.8px; color: #dcdcdc; }
.winbtns { margin-left: auto; display: flex; align-items: center; padding-right: 5px; }
.wb { width: 14px; height: 14px; margin-left: 11px; }
.wb-close { margin-left: 18px; }

/* ribbon tabs */
.tabs { height: 29px; display: flex; align-items: flex-end; gap: 7px; background: #717171; border-bottom: 1px solid #333; }
.tab { width: 60px; height: 28px; text-align: center; line-height: 30px; color: #d2d2d2; font-size: 13.5px; }
.tab-app { width: 91px; background: linear-gradient(#2f78d4, #1a52a4); color: #e2ecfa; border-radius: 4px 4px 0 0; font-size: 14px; border: 1px solid #1a4a90; border-bottom: 0; line-height: 26px; }
.tab-home { margin-left: 3px; width: 70px; }
.tab:nth-child(3) { width: 70px; }
.tab-active { width: 80px; margin-left: 1px; height: 29px; margin-bottom: -1px; background: linear-gradient(#fafafa, #efefef); color: #1c1c1c; border-radius: 3px 3px 0 0; line-height: 31px; }
.help { width: 18px; height: 18px; margin: 0 4px 5px auto; }
.help-q { font: bold 13px "Liberation Sans", sans-serif; fill: #fff; }

/* ribbon */
.ribbon { height: 109px; display: flex; padding-top: 3px; background: linear-gradient(#f2f2f2, #e6e6e6 45%, #cfcfcf); border-bottom: 2px solid #bdbdbd; font-size: 13.7px; }
.group { display: flex; flex-direction: column; height: 101px; border-right: 1px solid #8c8c8c; }
.g1 { width: 186px; } .g2 { width: 131px; } .g3 { width: 153px; } .g4 { width: 154px; }
.g5 { width: 143px; } .g6 { width: 108px; } .g7 { width: 232px; } .g8 { width: 134px; }
.g9 { width: 118px; } .g10 { width: 132px; } .g11 { width: 132px; } .g12 { width: 52px; } .g13 { width: 139px; }
.gbody { height: 80px; display: flex; }
.glabel { height: 21px; line-height: 22px; padding-left: 4px; text-align: center; color: #3c3c3c; white-space: nowrap; }
.off { color: #a4a4a4; }
.ic18 { width: 18px; height: 18px; }
.ic20 { width: 20px; height: 20px; }
.tri { width: 0; height: 0; border: 4px solid transparent; border-top: 5px solid #666; border-bottom: 0; }
.tri-off { margin-top: 9px; border-top-color: #999; }
.tri-lite { border-top-color: #ccc; }
.tri-inline { display: inline-block; margin-left: 3px; vertical-align: 3px; }
.tri-small { border-width: 3px; border-top-width: 4px; border-bottom: 0; border-top-color: #777; }

.col-layout { width: 101px; margin: 2px 0 0 5px; }
.combo { display: flex; align-items: center; justify-content: space-between; height: 26px; padding: 0 5px 0 2px; background: #c6c6c6; border: 1px solid #999; }
.row { display: flex; align-items: center; gap: 5px; height: 24px; }
.row-save { padding-left: 5px; }
.row-save + .row-save { margin-top: -1px; }
.col-layout .combo + .row { margin-top: 1px; }
.big { display: flex; flex-direction: column; align-items: center; text-align: center; padding-top: 9px; }
.big span { margin-top: 11px; line-height: 14px; display: block; white-space: nowrap; }
.big-40 { width: 40px; padding-top: 11px; }
.big-40 span { margin-top: 12px; }
.big-74 { width: 74px; }
.big-80 { width: 80px; margin-left: 2px; }
.big-102 { width: 102px; margin-left: 2px; }
.folder { width: 37px; height: 32px; }
.floppy { width: 30px; height: 30px; }
.gbody-big { padding-left: 12px; }
.g4 .gbody-big { padding-left: 13px; }

.gbody-list { flex-direction: column; padding: 3px 0 0 10px; }
.rowi { height: 25px; gap: 4px; white-space: nowrap; }
.gbody-model { flex-direction: column; padding: 12px 0 0 7px; gap: 10px; }
.g10 .gbody-model { padding-left: 8px; }
.pick { display: flex; align-items: center; gap: 4px; height: 24px; padding-left: 5px; }
.pick-on { background: linear-gradient(#ffe79a, #ffd864); border: 1px solid #d8a840; border-radius: 3px; padding-left: 4px; }
.pick-86 { width: 86px; }
.pick-103 { width: 103px; }
.gbody-form { flex-direction: column; padding: 11px 0 0 10px; }
.fline { display: flex; align-items: center; height: 26px; }
.robot-lbl { width: 43px; }
.combo-robot { width: 83px; padding: 0; border-color: #bbb; color: #8a8a8a; }
.combo-robot span { padding-left: 3px; white-space: nowrap; }
.combo-robot b { display: flex; align-items: center; justify-content: center; width: 18px; height: 24px; background: #b0b0b0; }
.cline { display: flex; align-items: center; height: 16px; margin-top: 14px; gap: 8px; white-space: nowrap; }
.check { width: 16px; height: 16px; background: linear-gradient(#e8e8e8, #fafafa); border: 1px solid #8c8c8c; }
.gbody-rec { padding: 6px 0 0 10px; }
.rec-btns { display: flex; flex-direction: column; gap: 8px; }
.rec-form { margin: 5px 0 0 8px; }
.fps-lbl { width: 30px; }
.combo-fps { width: 21px; justify-content: center; padding: 0; }
.gbody-view { padding: 3px 0 0 10px; }
.axes { display: grid; grid-template-columns: 20px 19px; grid-auto-rows: 23px; column-gap: 5px; row-gap: 3px; align-items: center; }
.axis { width: 20px; height: 20px; background: #050505; font: bold 15px/20px "Liberation Sans", sans-serif; text-align: center; }
.axis-x { color: #e82020; } .axis-y { color: #e8e020; } .axis-z { color: #1ca0d8; }
.spin { height: 23px; background: #c8c8c8; border: 1px solid #999; display: flex; flex-direction: column; justify-content: space-around; align-items: center; padding: 3px 0; }
.spin i { width: 0; height: 0; border: 3px solid transparent; border-bottom: 4px solid #666; border-top: 0; }
.spin i + i { border-bottom: 0; border-top: 4px solid #666; }
.vsep { width: 1px; height: 77px; margin: 0 6px 0 3px; background: #a8a8b0; }
.views { display: grid; grid-template-columns: 20px 20px; grid-auto-rows: 20px; column-gap: 6px; row-gap: 7px; padding-top: 1px; }
.views svg { width: 20px; height: 20px; }
.vt { font: bold 11px "Liberation Sans", sans-serif; }
.vy { fill: #ff0; } .vr { fill: #f11; } .vc { fill: #0ff; }
.gbody-zoom { flex-direction: column; padding: 2px 0 0 7px; }
.zrow { display: flex; align-items: center; gap: 5px; height: 24px; padding-left: 3px; white-space: nowrap; }
.zrow-on { width: 73px; background: linear-gradient(#ffe79a, #ffd864); border: 1px solid #d8a840; border-radius: 3px; padding-left: 2px; }
.gbody-3d { justify-content: center; padding-left: 4px; }
.big-3d { padding-top: 41px; }
.gbody-tool { padding: 30px 0 0 12px; }
.gbody-tool .rowi { gap: 5px; }

/* main */
.workarea { height: 833px; display: flex; background: #737373; }
.left-rail { width: 30px; padding: 8px 0 0 1px; }
.side-tab { display: flex; flex-direction: column; align-items: center; background: #f2f2f2; border-radius: 0 3px 3px 0; }
.vtext { writing-mode: vertical-rl; font-size: 13px; }
.side-ws { width: 25px; height: 104px; padding-top: 11px; gap: 3px; }
.ws-ic { width: 18px; height: 18px; }
.center { width: 1555px; display: flex; flex-direction: column; }
.doc-tabs { height: 31px; display: flex; justify-content: space-between; align-items: flex-end; padding-left: 5px; }
.doc-tab { width: 135px; height: 29px; display: flex; align-items: center; padding-left: 10px; gap: 6px; background: linear-gradient(#f4e8d4, #ffb864); clip-path: polygon(0 0, 112px 0, 100% 100%, 0 100%); border-radius: 5px 0 0 0; font-size: 12.4px; }
.doc-ic { width: 16px; height: 16px; }
.doc-x { width: 12px; height: 12px; margin-left: 3px; }
.doc-more { width: 0; height: 0; margin: 0 5px 12px 0; border: 5px solid transparent; border-top: 6px solid #ddd; border-bottom: 0; }
.doc-frame { height: 772px; border: 6px solid #ffb566; border-right-width: 5px; background: #a9a9b6; padding: 1px; }
.mdi { position: relative; height: 100%; background: #d2d2d2; border-right: 1px solid #eee; border-bottom: 1px solid #eee; }
.bottom-tabs { height: 30px; display: flex; gap: 19px; padding: 3px 0 0 6px; font-size: 13.5px; }
.btab { width: 78px; height: 27px; display: flex; align-items: center; gap: 3px; padding-left: 6px; background: #f2f2f2; border-radius: 3px 3px 0 0; }
.props-ic { width: 18px; height: 20px; }
.splitter { width: 6px; height: 803px; margin-left: 1px; background: #bcbcbc; }
.tree-panel { width: 299px; height: 803px; display: flex; flex-direction: column; }
.tree-head { height: 26px; display: flex; align-items: center; gap: 9px; padding: 2px 9px 0 7px; font-weight: 700; color: #e8e8e8; font-size: 14.2px; }
.tree-head span { margin-right: auto; }
.pin { width: 12px; height: 14px; }
.tree-body { flex: 1; background: #fff; border: 1px solid #b4bcc8; border-top: 0; padding-top: 2px; }
.node { display: flex; align-items: center; height: 22px; padding-left: 8px; gap: 4px; font-size: 14px; color: #222; }
.node-sub { padding-left: 34px; gap: 5px; }
.exp { width: 9px; height: 9px; background: linear-gradient(135deg, transparent 50%, #bbb 50%, #fff 60%); border-right: 1px solid #aaa; border-bottom: 1px solid #aaa; margin-right: 1px; }
.elbow { width: 13px; height: 16px; margin: -12px -5px 0 0; border-left: 1px dotted #888; border-bottom: 1px dotted #888; }
.tcheck { width: 16px; height: 18px; border: 1px solid #444; position: relative; background: #fff; }
.tcheck::after { content: ""; position: absolute; left: 4px; top: 2px; width: 5px; height: 10px; border: solid #333; border-width: 0 1.5px 1.5px 0; transform: rotate(40deg); }
.tree-ic { width: 18px; height: 18px; margin-left: 3px; }
.node-sub .tree-ic { margin-left: 0; }
.node span { margin-left: 2px; }
.node-sub span { margin-left: 4px; }
.right-rail { width: 29px; padding: 8px 0 0 3px; }
.side-props { width: 26px; height: 97px; padding-top: 8px; gap: 3px; border-radius: 3px 0 0 3px; }

/* MDI windows */
.win { position: absolute; }
.monitor { left: 116px; top: 55px; width: 922px; height: 250px; background: linear-gradient(#6a6a6a, #7a7a7a); border-radius: 5px 5px 0 0; border: 1px solid #666; display: flex; flex-direction: column; padding: 0 3px 5px 5px; }
.win-title { height: 39px; display: flex; align-items: center; gap: 6px; color: #d4d4d4; font-size: 14.5px; padding: 4px 2px 0 3px; }
.win-btns { margin-left: auto; display: flex; gap: 14px; padding-right: 8px; margin-top: -5px; }
.win-btns svg { width: 14px; height: 14px; }
.win-body { height: 204px; display: flex; border: 2px solid #e4e4e4; background: #000; border-top: 1px solid #444; border-left-width: 1px; }
.scene { width: 885px; height: 201px; background: #000; }
.vscroll { flex: 1; background: #efefef; display: flex; flex-direction: column; padding: 1px; }
.sb-btn { height: 20px; background: #e0e0e0; border: 1px solid #bbb; display: flex; align-items: center; justify-content: center; }
.sb-btn b { width: 0; height: 0; border: 5px solid transparent; }
.sb-btn .up { border-bottom: 7px solid #444; border-top: 0; }
.sb-btn .down { border-top: 7px solid #444; border-bottom: 0; }
.sb-track { flex: 1; padding-top: 2px; }
.sb-thumb { height: 78px; background: #e8e8e8; border: 1px solid #c4c4c4; display: flex; align-items: center; justify-content: center; }
.sb-thumb i { width: 10px; height: 8px; border-top: 2px solid #999; border-bottom: 2px solid #999; }

.sim { left: 303px; top: 94px; width: 391px; height: 391px; background: #9b9b9b; border-radius: 4px 4px 0 0; border: 1px solid #777; padding: 0 4px 4px; display: flex; flex-direction: column; font-family: "Liberation Sans", sans-serif; }
.sim-title { height: 36px; display: flex; align-items: center; justify-content: space-between; padding: 6px 10px 0 7px; color: #c6c6c6; font-size: 15px; letter-spacing: .7px; }
.sim-title svg { width: 12px; height: 12px; margin-top: -6px; }
.sim-body { flex: 1; background: #1a4a22; border-top: 1px solid #777; padding: 8px 0 0 8px; color: #e4e8e4; font-size: 12px; letter-spacing: .6px; }
.srow { display: flex; }
.pnl { position: relative; border: 1px solid #87958a; border-radius: 5px; }
.lbl { white-space: nowrap; }
.srow-top { gap: 9px; }
.pnl-status { width: 265px; height: 85px; padding: 1px 0 0 9px; }
.stat-line { display: flex; align-items: flex-start; height: 26px; }
.stat-line .lbl { line-height: 14px; margin-top: 4px; }
.stat-line .lbl-a { width: 69px; margin-top: 1px; }
.led-field { height: 22px; background: #000; color: #ff8c00; border: 2px solid #c8c8c8; border-top-color: #999; border-left-color: #aaa; text-align: center; line-height: 18px; white-space: nowrap; }
.led-wide { width: 172px; }
.led-85 { width: 85px; }
.led-86 { width: 86px; }
.stat-line .lbl-b { margin-left: 11px; width: 47px; }
.stat-line .lbl-c { margin-left: 9px; width: 48px; }
.mini { width: 34px; height: 22px; margin-top: 1px; }
.pnl-over { width: 89px; height: 83px; padding: 2px 0 0 9px; }
.over-lbl { text-align: center; margin: 1px 0 0 -9px; height: 24px; line-height: 14px; }
.over-input { width: 63px; height: 23px; margin-left: 4px; background: #fff; color: #111; display: flex; align-items: center; justify-content: space-between; padding: 0 5px 0 9px; }
.over-btns { display: flex; margin-top: 4px; }
.over-btn { width: 37px; height: 22px; background: #d2d2d2; border: 1px solid #eee; border-right-color: #888; border-bottom-color: #888; display: flex; align-items: center; justify-content: center; }
.over-btn + .over-btn { width: 30px; }
.over-btn svg { width: 18px; height: 16px; }
.pnl-op { width: 363px; height: 84px; margin-top: 9px; padding: 14px 0 0 6px; display: flex; gap: 9px; }
.legend { position: absolute; top: -9px; left: 50%; transform: translateX(-50%); padding: 0 8px; background: #1a4a22; white-space: nowrap; line-height: 16px; }
.legend-op { left: 46.7%; }
.legend-mon { top: -10px; left: 52%; padding: 0 4px; }
.legend-step { top: -10px; left: 43.5%; padding: 0 3px; }
.pcol { width: 48px; display: flex; flex-direction: column; align-items: center; }
.pcol .lbl { height: 14px; line-height: 14px; margin-bottom: 3px; }
.pcol .lbl-svo { margin-left: 10px; }
.pcol .lbl-err { margin-right: 4px; }
.pcol .lbl-prog { margin-right: 7px; }
.pcol-stop { margin-left: 18px; }
.pcol-stop .lbl { margin-right: 4px; }
.pcol-reset { margin-left: -3px; }
.pbtn { width: 48px; height: 47px; border: 4px solid; border-color: #e6e6e6 #9a9a9a #8a8a8a #e2e2e2; background: #ccc; }
.pbtn svg { width: 40px; height: 39px; }
.srow-mid { margin-top: 13px; gap: 11px; }
.pnl-mon { width: 174px; height: 77px; padding: 7px 0 0 6px; display: flex; gap: 9px; }
.pnl-mon .lbl { margin-bottom: 3px; }
.pnl-step { width: 179px; height: 77px; padding: 9px 0 0 10px; display: flex; gap: 7px; }
.pnl-step .lbl { margin-bottom: 2px; }
.prog { font: 10.5px "Liberation Sans", sans-serif; fill: #000; letter-spacing: 0; }
.srow-bot { margin-top: 3px; align-items: flex-start; }
.tools { width: 185px; padding-left: 7px; display: flex; gap: 9px; }
.tools .pcol .lbl { margin-bottom: 1px; }
.pnl-speed { width: 111px; height: 60px; margin-top: 8px; display: flex; padding: 10px 0 0 9px; justify-content: space-between; }
.legend-speed { top: -10px; left: 46%; padding: 0 4px; }
.speed-lbls { display: flex; flex-direction: column; gap: 13px; }
.lbl-low { margin-left: 11px; }
.dial { width: 40px; height: 40px; margin: 0 11px 0 0; }
.auto { width: 67px; height: 56px; margin: 7px 0 0 7px; background: #0000f0; color: #fff; display: flex; flex-direction: column; align-items: center; overflow: hidden; }
.auto-txt { font-size: 10.5px; font-weight: 700; letter-spacing: .2px; line-height: 14px; transform: scaleY(1.25); }
.auto-ic { width: 50px; height: 40px; margin-top: 1px; }

/* status bar */
.statusbar { height: 27px; display: flex; align-items: center; justify-content: space-between; background: linear-gradient(#dadada, #c4c4c4); border-top: 2px solid #b0b0b0; padding-left: 3px; }
.ready { font-size: 13.5px; }
.panes { display: flex; gap: 2px; height: 24px; align-items: stretch; }
.pane { display: block; background: #c9c9c9; border-right: 1px solid #f2f2f2; color: #a6a6a6; text-align: center; line-height: 24px; font-size: 13.5px; }
.p9 { width: 10px; }
.sim-mode { width: 105px; height: 22px; margin: 1px 0 1px 1px; background: #0ff; color: #0a4a5a; line-height: 22px; white-space: nowrap; font-size: 12.8px; }
.p26 { width: 27px; }
.p35 { width: 35px; }
.p37 { width: 38px; }
.p42 { width: 43px; }
.pend { width: 10px; background: #dedede; border: 0; }

/* taskbar */
.taskbar { height: 50px; display: flex; background: #2a2024; }
.tb { width: 62px; height: 50px; display: flex; align-items: center; justify-content: center; position: relative; }
.tb-sys { width: 60px; }
.tb-first { margin-left: 3px; }
.tbi { width: 30px; height: 30px; }
.tbi-win { width: 20px; height: 20px; }
.tb-on::after { content: ""; position: absolute; left: 6px; right: 6px; bottom: 0; height: 3px; background: #76b9ed; }
.tb-sel { background: #54484c; border-bottom: 3px solid #76b9ed; padding-top: 3px; }
.tb-split::before { content: ""; position: absolute; right: 6px; bottom: 0; width: 10px; height: 3px; background: #4a84b4; z-index: 1; }
.tb-rc span { font: italic 700 24px "Liberation Serif", serif; color: #10107a; }
.tray { margin-left: auto; display: flex; align-items: center; color: #f2f2f2; padding-right: 31px; }
.tr { flex: none; }
.tr-chev { width: 16px; height: 10px; }
.tr-cloud { width: 20px; height: 12px; margin-left: 12px; }
.tr-batt { width: 20px; height: 12px; margin-left: 10px; }
.tr-wifi { width: 15px; height: 14px; margin-left: 13px; }
.tr-vol { width: 20px; height: 16px; margin-left: 12px; }
.eng { margin-left: 13px; font-size: 14px; }
.clock { display: flex; flex-direction: column; align-items: center; width: 78px; margin-left: 11px; font-size: 14px; line-height: 22px; }
.tr-note { width: 20px; height: 20px; margin-left: 18px; }
```
